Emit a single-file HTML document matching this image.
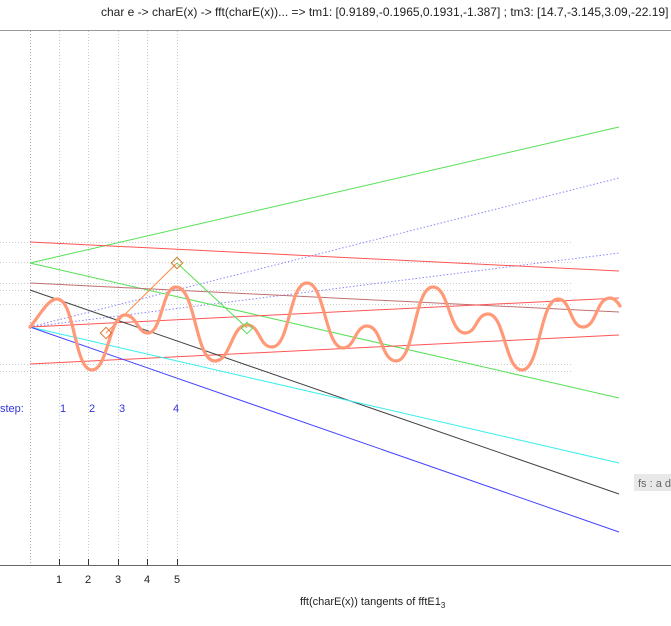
<!DOCTYPE html>
<html><head><meta charset="utf-8"><style>
body{margin:0;width:671px;height:626px;overflow:hidden;background:#fff;font-family:"Liberation Sans",sans-serif;}
svg{position:absolute;left:0;top:0}
</style></head><body>
<svg width="671" height="626" viewBox="0 0 671 626" xmlns="http://www.w3.org/2000/svg">
<text x="101" y="16" font-size="12" fill="#222" font-family="Liberation Sans">char e -&gt; charE(x) -&gt; fft(charE(x))... =&gt; tm1: [0.9189,-0.1965,0.1931,-1.387] ; tm3: [14.7,-3.145,3.09,-22.19]</text>
<line x1="0" y1="30.5" x2="671" y2="30.5" stroke="#999" stroke-width="1"/>
<g stroke="#ccc" stroke-dasharray="1,2" stroke-width="1">
<line x1="0" y1="242.5" x2="571" y2="242.5"/>
<line x1="0" y1="262.5" x2="571" y2="262.5"/>
<line x1="0" y1="283.5" x2="571" y2="283.5"/>
<line x1="0" y1="290.5" x2="571" y2="290.5"/>
<line x1="0" y1="304.5" x2="571" y2="304.5"/>
<line x1="0" y1="364.5" x2="571" y2="364.5"/>
<line x1="0" y1="371.5" x2="571" y2="371.5"/>
<line x1="59.5" y1="31" x2="59.5" y2="565"/>
<line x1="88.5" y1="31" x2="88.5" y2="565"/>
<line x1="118.5" y1="31" x2="118.5" y2="565"/>
<line x1="147.5" y1="31" x2="147.5" y2="565"/>
<line x1="177.5" y1="31" x2="177.5" y2="565"/>
</g>
<line x1="30.5" y1="31" x2="30.5" y2="565" stroke="#aaa" stroke-dasharray="1,2"/>
<g stroke-width="1" fill="none">
<line x1="30" y1="263" x2="619" y2="127" stroke="#55e055"/>
<line x1="30" y1="327" x2="619" y2="178" stroke="#8888ff" stroke-dasharray="1.5,2"/>
<line x1="30" y1="327" x2="619" y2="253" stroke="#8888ff" stroke-dasharray="1.5,2"/>
<line x1="30" y1="242" x2="619" y2="271" stroke="#ff5555"/>
<line x1="30" y1="263" x2="619" y2="398" stroke="#55e055"/>
<line x1="30" y1="283" x2="619" y2="312" stroke="#c07070"/>
<line x1="30" y1="327" x2="619" y2="298" stroke="#ff5555"/>
<line x1="30" y1="364" x2="619" y2="335" stroke="#ff5555"/>
<line x1="30" y1="290" x2="619" y2="494" stroke="#444"/>
<line x1="30" y1="327" x2="619" y2="463" stroke="#33eeee"/>
<line x1="30" y1="327" x2="619" y2="532" stroke="#4444ff"/>
<line x1="106" y1="333" x2="177" y2="263" stroke="#ff8844"/>
<line x1="177" y1="263" x2="247" y2="328" stroke="#55e055"/>
</g>
<path d="M30,327 C40,315 48,299 57,299 C75,299 74,370 92,370 C108,370 109,315 125,315 C137,315 137,333 148,333 C162,333 162,287 176,287 C196,287 195,361 215,361 C231,361 231,325 247,325 C260,325 259,347 272,347 C290,347 289,283 307,283 C325,283 325,348 343,348 C355,348 355,326 367,326 C382,326 381,361 396,361 C415,361 414,287 433,287 C449,287 449,333 465,333 C477,333 476,314 488,314 C505,314 505,370 522,370 C540,370 540,299 558,299 C571,299 570,327 583,327 C597,327 596,298 610,298 C614,298 617,301 620,306" fill="none" stroke="#ff9977" stroke-width="3.2" stroke-linejoin="round" stroke-linecap="round"/>
<g fill="none" stroke-width="1">
<rect x="102" y="329" width="8" height="8" transform="rotate(45 106 333)" stroke="#dd7733"/>
<rect x="173" y="259" width="8" height="8" transform="rotate(45 177 263)" stroke="#cc7722"/>
<rect x="243" y="324" width="8" height="8" transform="rotate(45 247 328)" stroke="#55e055"/>
</g>
<g font-size="11" fill="#3333dd" font-family="Liberation Sans">
<text x="0" y="412">step:</text>
<text x="60" y="412">1</text>
<text x="89" y="412">2</text>
<text x="119" y="412">3</text>
<text x="173" y="412">4</text>
</g>
<line x1="0" y1="565.5" x2="671" y2="565.5" stroke="#666"/>
<g stroke="#333">
<line x1="59.5" y1="559" x2="59.5" y2="565"/>
<line x1="88.5" y1="559" x2="88.5" y2="565"/>
<line x1="118.5" y1="559" x2="118.5" y2="565"/>
<line x1="147.5" y1="559" x2="147.5" y2="565"/>
<line x1="177.5" y1="559" x2="177.5" y2="565"/>
</g>
<g font-size="11" fill="#222" font-family="Liberation Sans">
<text x="56" y="583">1</text>
<text x="85" y="583">2</text>
<text x="115" y="583">3</text>
<text x="144" y="583">4</text>
<text x="174" y="583">5</text>
<text x="300" y="605">fft(charE(x))  tangents of fftE1<tspan font-size="8" dy="3">3</tspan></text>
</g>
<rect x="634" y="474" width="40" height="17" fill="#e8e8e8"/>
<text x="638" y="487" font-size="11" fill="#666" font-family="Liberation Sans">fs : a d</text>
</svg>
</body></html>
